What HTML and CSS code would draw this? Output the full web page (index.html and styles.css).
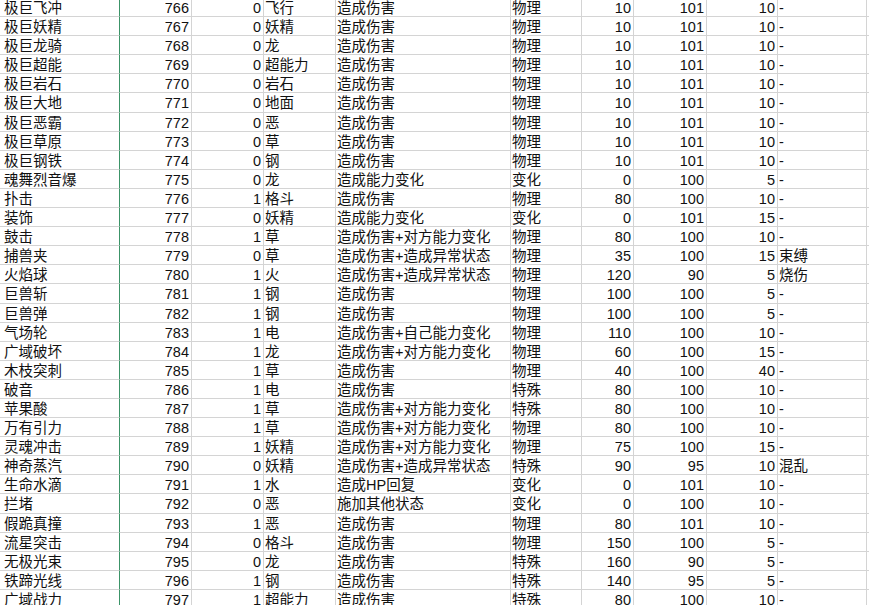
FILE: index.html
```html
<!DOCTYPE html>
<html lang="zh-CN">
<head>
<meta charset="utf-8">
<title>招式表</title>
<link rel="stylesheet" href="styles.css">
</head>
<body>
<div class="sheet">
<div class="row"><div class="c a">极巨飞冲</div><div class="c n">766</div><div class="c n">0</div><div class="c t">飞行</div><div class="c e">造成伤害</div><div class="c t">物理</div><div class="c n g">10</div><div class="c n">101</div><div class="c n">10</div><div class="c j">-</div><div class="c k"></div></div>
<div class="row"><div class="c a">极巨妖精</div><div class="c n">767</div><div class="c n">0</div><div class="c t">妖精</div><div class="c e">造成伤害</div><div class="c t">物理</div><div class="c n g">10</div><div class="c n">101</div><div class="c n">10</div><div class="c j">-</div><div class="c k"></div></div>
<div class="row"><div class="c a">极巨龙骑</div><div class="c n">768</div><div class="c n">0</div><div class="c t">龙</div><div class="c e">造成伤害</div><div class="c t">物理</div><div class="c n g">10</div><div class="c n">101</div><div class="c n">10</div><div class="c j">-</div><div class="c k"></div></div>
<div class="row"><div class="c a">极巨超能</div><div class="c n">769</div><div class="c n">0</div><div class="c t">超能力</div><div class="c e">造成伤害</div><div class="c t">物理</div><div class="c n g">10</div><div class="c n">101</div><div class="c n">10</div><div class="c j">-</div><div class="c k"></div></div>
<div class="row"><div class="c a">极巨岩石</div><div class="c n">770</div><div class="c n">0</div><div class="c t">岩石</div><div class="c e">造成伤害</div><div class="c t">物理</div><div class="c n g">10</div><div class="c n">101</div><div class="c n">10</div><div class="c j">-</div><div class="c k"></div></div>
<div class="row"><div class="c a">极巨大地</div><div class="c n">771</div><div class="c n">0</div><div class="c t">地面</div><div class="c e">造成伤害</div><div class="c t">物理</div><div class="c n g">10</div><div class="c n">101</div><div class="c n">10</div><div class="c j">-</div><div class="c k"></div></div>
<div class="row"><div class="c a">极巨恶霸</div><div class="c n">772</div><div class="c n">0</div><div class="c t">恶</div><div class="c e">造成伤害</div><div class="c t">物理</div><div class="c n g">10</div><div class="c n">101</div><div class="c n">10</div><div class="c j">-</div><div class="c k"></div></div>
<div class="row"><div class="c a">极巨草原</div><div class="c n">773</div><div class="c n">0</div><div class="c t">草</div><div class="c e">造成伤害</div><div class="c t">物理</div><div class="c n g">10</div><div class="c n">101</div><div class="c n">10</div><div class="c j">-</div><div class="c k"></div></div>
<div class="row"><div class="c a">极巨钢铁</div><div class="c n">774</div><div class="c n">0</div><div class="c t">钢</div><div class="c e">造成伤害</div><div class="c t">物理</div><div class="c n g">10</div><div class="c n">101</div><div class="c n">10</div><div class="c j">-</div><div class="c k"></div></div>
<div class="row"><div class="c a">魂舞烈音爆</div><div class="c n">775</div><div class="c n">0</div><div class="c t">龙</div><div class="c e">造成能力变化</div><div class="c t">变化</div><div class="c n g">0</div><div class="c n">100</div><div class="c n">5</div><div class="c j">-</div><div class="c k"></div></div>
<div class="row"><div class="c a">扑击</div><div class="c n">776</div><div class="c n">1</div><div class="c t">格斗</div><div class="c e">造成伤害</div><div class="c t">物理</div><div class="c n g">80</div><div class="c n">100</div><div class="c n">10</div><div class="c j">-</div><div class="c k"></div></div>
<div class="row"><div class="c a">装饰</div><div class="c n">777</div><div class="c n">0</div><div class="c t">妖精</div><div class="c e">造成能力变化</div><div class="c t">变化</div><div class="c n g">0</div><div class="c n">101</div><div class="c n">15</div><div class="c j">-</div><div class="c k"></div></div>
<div class="row"><div class="c a">鼓击</div><div class="c n">778</div><div class="c n">1</div><div class="c t">草</div><div class="c e">造成伤害+对方能力变化</div><div class="c t">物理</div><div class="c n g">80</div><div class="c n">100</div><div class="c n">10</div><div class="c j">-</div><div class="c k"></div></div>
<div class="row"><div class="c a">捕兽夹</div><div class="c n">779</div><div class="c n">0</div><div class="c t">草</div><div class="c e">造成伤害+造成异常状态</div><div class="c t">物理</div><div class="c n g">35</div><div class="c n">100</div><div class="c n">15</div><div class="c j">束缚</div><div class="c k"></div></div>
<div class="row"><div class="c a">火焰球</div><div class="c n">780</div><div class="c n">1</div><div class="c t">火</div><div class="c e">造成伤害+造成异常状态</div><div class="c t">物理</div><div class="c n g">120</div><div class="c n">90</div><div class="c n">5</div><div class="c j">烧伤</div><div class="c k"></div></div>
<div class="row"><div class="c a">巨兽斩</div><div class="c n">781</div><div class="c n">1</div><div class="c t">钢</div><div class="c e">造成伤害</div><div class="c t">物理</div><div class="c n g">100</div><div class="c n">100</div><div class="c n">5</div><div class="c j">-</div><div class="c k"></div></div>
<div class="row"><div class="c a">巨兽弹</div><div class="c n">782</div><div class="c n">1</div><div class="c t">钢</div><div class="c e">造成伤害</div><div class="c t">物理</div><div class="c n g">100</div><div class="c n">100</div><div class="c n">5</div><div class="c j">-</div><div class="c k"></div></div>
<div class="row"><div class="c a">气场轮</div><div class="c n">783</div><div class="c n">1</div><div class="c t">电</div><div class="c e">造成伤害+自己能力变化</div><div class="c t">物理</div><div class="c n g">110</div><div class="c n">100</div><div class="c n">10</div><div class="c j">-</div><div class="c k"></div></div>
<div class="row"><div class="c a">广域破坏</div><div class="c n">784</div><div class="c n">1</div><div class="c t">龙</div><div class="c e">造成伤害+对方能力变化</div><div class="c t">物理</div><div class="c n g">60</div><div class="c n">100</div><div class="c n">15</div><div class="c j">-</div><div class="c k"></div></div>
<div class="row"><div class="c a">木枝突刺</div><div class="c n">785</div><div class="c n">1</div><div class="c t">草</div><div class="c e">造成伤害</div><div class="c t">物理</div><div class="c n g">40</div><div class="c n">100</div><div class="c n">40</div><div class="c j">-</div><div class="c k"></div></div>
<div class="row"><div class="c a">破音</div><div class="c n">786</div><div class="c n">1</div><div class="c t">电</div><div class="c e">造成伤害</div><div class="c t">特殊</div><div class="c n g">80</div><div class="c n">100</div><div class="c n">10</div><div class="c j">-</div><div class="c k"></div></div>
<div class="row"><div class="c a">苹果酸</div><div class="c n">787</div><div class="c n">1</div><div class="c t">草</div><div class="c e">造成伤害+对方能力变化</div><div class="c t">特殊</div><div class="c n g">80</div><div class="c n">100</div><div class="c n">10</div><div class="c j">-</div><div class="c k"></div></div>
<div class="row"><div class="c a">万有引力</div><div class="c n">788</div><div class="c n">1</div><div class="c t">草</div><div class="c e">造成伤害+对方能力变化</div><div class="c t">物理</div><div class="c n g">80</div><div class="c n">100</div><div class="c n">10</div><div class="c j">-</div><div class="c k"></div></div>
<div class="row"><div class="c a">灵魂冲击</div><div class="c n">789</div><div class="c n">1</div><div class="c t">妖精</div><div class="c e">造成伤害+对方能力变化</div><div class="c t">物理</div><div class="c n g">75</div><div class="c n">100</div><div class="c n">15</div><div class="c j">-</div><div class="c k"></div></div>
<div class="row"><div class="c a">神奇蒸汽</div><div class="c n">790</div><div class="c n">0</div><div class="c t">妖精</div><div class="c e">造成伤害+造成异常状态</div><div class="c t">特殊</div><div class="c n g">90</div><div class="c n">95</div><div class="c n">10</div><div class="c j">混乱</div><div class="c k"></div></div>
<div class="row"><div class="c a">生命水滴</div><div class="c n">791</div><div class="c n">1</div><div class="c t">水</div><div class="c e">造成HP回复</div><div class="c t">变化</div><div class="c n g">0</div><div class="c n">101</div><div class="c n">10</div><div class="c j">-</div><div class="c k"></div></div>
<div class="row"><div class="c a">拦堵</div><div class="c n">792</div><div class="c n">0</div><div class="c t">恶</div><div class="c e">施加其他状态</div><div class="c t">变化</div><div class="c n g">0</div><div class="c n">100</div><div class="c n">10</div><div class="c j">-</div><div class="c k"></div></div>
<div class="row"><div class="c a">假跪真撞</div><div class="c n">793</div><div class="c n">1</div><div class="c t">恶</div><div class="c e">造成伤害</div><div class="c t">物理</div><div class="c n g">80</div><div class="c n">101</div><div class="c n">10</div><div class="c j">-</div><div class="c k"></div></div>
<div class="row"><div class="c a">流星突击</div><div class="c n">794</div><div class="c n">0</div><div class="c t">格斗</div><div class="c e">造成伤害</div><div class="c t">物理</div><div class="c n g">150</div><div class="c n">100</div><div class="c n">5</div><div class="c j">-</div><div class="c k"></div></div>
<div class="row"><div class="c a">无极光束</div><div class="c n">795</div><div class="c n">0</div><div class="c t">龙</div><div class="c e">造成伤害</div><div class="c t">特殊</div><div class="c n g">160</div><div class="c n">90</div><div class="c n">5</div><div class="c j">-</div><div class="c k"></div></div>
<div class="row"><div class="c a">铁蹄光线</div><div class="c n">796</div><div class="c n">1</div><div class="c t">钢</div><div class="c e">造成伤害</div><div class="c t">特殊</div><div class="c n g">140</div><div class="c n">95</div><div class="c n">5</div><div class="c j">-</div><div class="c k"></div></div>
<div class="row"><div class="c a">广域战力</div><div class="c n">797</div><div class="c n">1</div><div class="c t">超能力</div><div class="c e">造成伤害</div><div class="c t">特殊</div><div class="c n g">80</div><div class="c n">100</div><div class="c n">10</div><div class="c j">-</div><div class="c k"></div></div>
</div>
</body>
</html>
```
FILE: styles.css
```css
html, body {
  margin: 0;
  padding: 0;
  background: #ffffff;
  overflow: hidden;
}
.sheet {
  margin-top: -2px;
  font-family: "Liberation Sans", "Noto Sans CJK SC", sans-serif;
  font-size: 14.5px;
  color: #111111;
}
.row {
  display: grid;
  grid-template-columns: 120px 72px 72px 72px 175px 71px 52px 73px 71px 89px 1fr;
  height: 19.1px;
}
.c {
  box-sizing: border-box;
  border-right: 1px solid #d4d4d4;
  border-bottom: 1px solid #d4d4d4;
  white-space: nowrap;
  overflow: hidden;
  line-height: 17px;
  padding-top: 2px;
}
.a {
  padding-left: 4px;
  border-right-color: #3c9468;
}
.n {
  text-align: right;
  padding-right: 2px;
}
.t, .e, .j {
  padding-left: 1px;
}
.k {
  border-right: none;
}
```
